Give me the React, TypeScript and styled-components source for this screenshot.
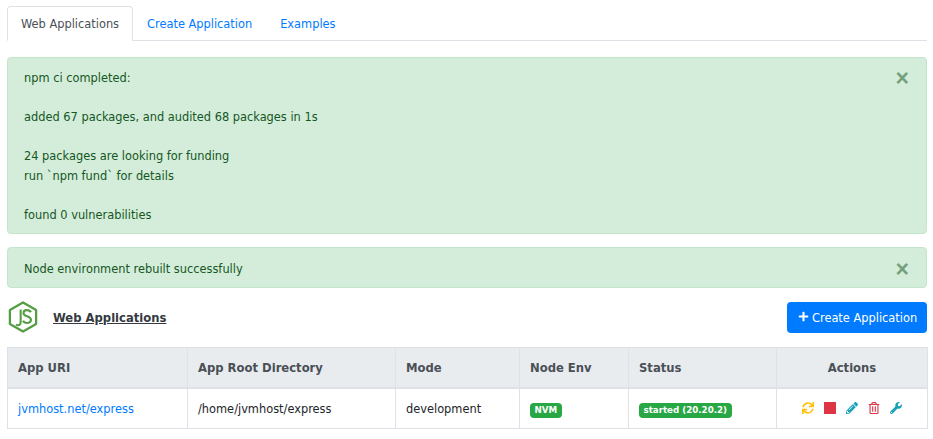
import React from "react";
import styled, {createGlobalStyle} from "styled-components";
import {FaPlus, FaSync, FaPencilAlt, FaRegTrashAlt, FaWrench} from "react-icons/fa";

const GlobalStyle = createGlobalStyle`
  html {
    font-size: 13px;
  }
  * {
    box-sizing: border-box;
  }
  body {
    margin: 0;
    background: #fff;
    color: #212529;
    font-family: "DejaVu Sans", sans-serif;
    font-size: 11.4px;
    line-height: 19.5px;
  }
`

const alerts = [
    ["npm ci completed:", "", "added 67 packages, and audited 68 packages in 1s", "", "24 packages are looking for funding", "run `npm fund` for details", "", "found 0 vulnerabilities"],
    ["Node environment rebuilt successfully"],
]

const App: React.FC = () => {
    return (
        <Page>
            <GlobalStyle/>
            <Tabs>
                <Tab $active>Web Applications</Tab>
                <Tab>Create Application</Tab>
                <Tab>Examples</Tab>
            </Tabs>
            {alerts.map((lines, i) => (
                <Alert key={i}>
                    <AlertText>{lines.map((line, j) => <div key={j}>{line || "\u00a0"}</div>)}</AlertText>
                    <Close>×</Close>
                </Alert>
            ))}
            <Header>
                <Title>
                    <NodeLogo viewBox="0 0 32 34">
                        <path d="M16 1.5 L30 9.5 V24.5 L16 32.5 L2 24.5 V9.5 Z" fill="none" stroke="#539e43" strokeWidth="2.4" strokeLinejoin="round"/>
                        <path d="M13.5 9 V22.5 C13.5 26 10.5 26.5 8.5 25" fill="none" stroke="#539e43" strokeWidth="2.2"/>
                        <path d="M24.5 12 C23 9 16.5 8.5 16.5 13 C16.5 17 24.5 15.5 24.5 20 C24.5 24.5 17.5 24 16 21" fill="none" stroke="#539e43" strokeWidth="2.2"/>
                    </NodeLogo>
                    <TitleText>Web Applications</TitleText>
                </Title>
                <CreateButton><PlusIcon size={11}/>Create Application</CreateButton>
            </Header>
            <Table>
                <thead>
                    <tr>
                        <Th $w={180}>App URI</Th>
                        <Th $w={208}>App Root Directory</Th>
                        <Th $w={124}>Mode</Th>
                        <Th $w={109}>Node Env</Th>
                        <Th $w={148}>Status</Th>
                        <Th $w={151} $center>Actions</Th>
                    </tr>
                </thead>
                <tbody>
                    <tr>
                        <Td><UriLink>jvmhost.net/express</UriLink></Td>
                        <Td>/home/jvmhost/express</Td>
                        <Td>development</Td>
                        <Td><Badge>NVM</Badge></Td>
                        <Td><Badge>started (20.20.2)</Badge></Td>
                        <Td>
                            <Actions>
                                <FaSync size={12} color="#ffc107"/>
                                <svg width="12" height="12" viewBox="0 0 12 12"><rect width="12" height="12" fill="#dc3545"/></svg>
                                <FaPencilAlt size={12} color="#17a2b8"/>
                                <FaRegTrashAlt size={12} color="#dc3545"/>
                                <FaWrench size={12} color="#17a2b8"/>
                            </Actions>
                        </Td>
                    </tr>
                </tbody>
            </Table>
        </Page>
    )
}

const Page = styled.div`
  padding: 6px 6px 0 7px;
`
const Tabs = styled.div`
  display: flex;
  border-bottom: 1px solid #dee2e6;
  margin-bottom: 16px;
`
const Tab = styled.a<{$active?: boolean}>`
  padding: 7.5px 13px 5.5px;
  margin-bottom: -1px;
  border: 1px solid ${p => p.$active ? "#dee2e6" : "transparent"};
  border-bottom-color: ${p => p.$active ? "#fff" : "transparent"};
  border-radius: 4px 4px 0 0;
  background: ${p => p.$active ? "#fff" : "transparent"};
  color: ${p => p.$active ? "#495057" : "#007bff"};
`
const Alert = styled.div`
  display: flex;
  justify-content: space-between;
  padding: 11.75px 17px 7.75px 16px;
  margin-bottom: 13px;
  border: 1px solid #c3e6cb;
  border-radius: 4px;
  background: #d4edda;
  color: #155724;
`
const AlertText = styled.div``
const Close = styled.span`
  color: #155724;
  opacity: 0.5;
  font-size: 23px;
  font-weight: 700;
  line-height: 19.5px;
  font-family: "Liberation Sans", sans-serif;
`
const Header = styled.div`
  display: flex;
  justify-content: space-between;
  align-items: center;
  height: 32px;
  margin-bottom: 14px;
`
const Title = styled.div`
  display: flex;
  align-items: center;
  gap: 15px;
  padding-left: 1px;
`
const NodeLogo = styled.svg`
  width: 30px;
  height: 32px;
`
const TitleText = styled.span`
  margin-top: 4px;
  font-size: 11.6px;
  font-weight: 700;
  color: #343a40;
  text-decoration: underline;
`
const CreateButton = styled.button`
  display: flex;
  align-items: center;
  gap: 3px;
  width: 140px;
  height: 31px;
  padding: 3px 0 0 11px;
  border: 0;
  border-radius: 4px;
  background: #007bff;
  color: #fff;
  font: inherit;
`
const PlusIcon = styled(FaPlus)`
  margin-top: -4px;
`
const Table = styled.table`
  width: 920px;
  border-collapse: collapse;
  table-layout: fixed;
`
const Th = styled.th<{$w: number; $center?: boolean}>`
  width: ${p => p.$w}px;
  height: 40px;
  padding: 2px 10px 0;
  border: 1px solid #dee2e6;
  border-bottom-width: 2px;
  background: #e9ecef;
  color: #495057;
  font-size: 11.6px;
  text-align: ${p => p.$center ? "center" : "left"};
`
const Td = styled.td`
  height: 41px;
  padding: 2px 10px 0;
  border: 1px solid #dee2e6;
`
const UriLink = styled.a`
  color: #007bff;
`
const Badge = styled.span`
  display: inline-block;
  padding: 3px 4.5px;
  border-radius: 4px;
  background: #28a745;
  color: #fff;
  font-size: 8.7px;
  font-weight: 700;
  line-height: 9.5px;
`
const Actions = styled.div`
  display: flex;
  justify-content: center;
  gap: 10px;
  margin-top: -2px;
`
export default App
